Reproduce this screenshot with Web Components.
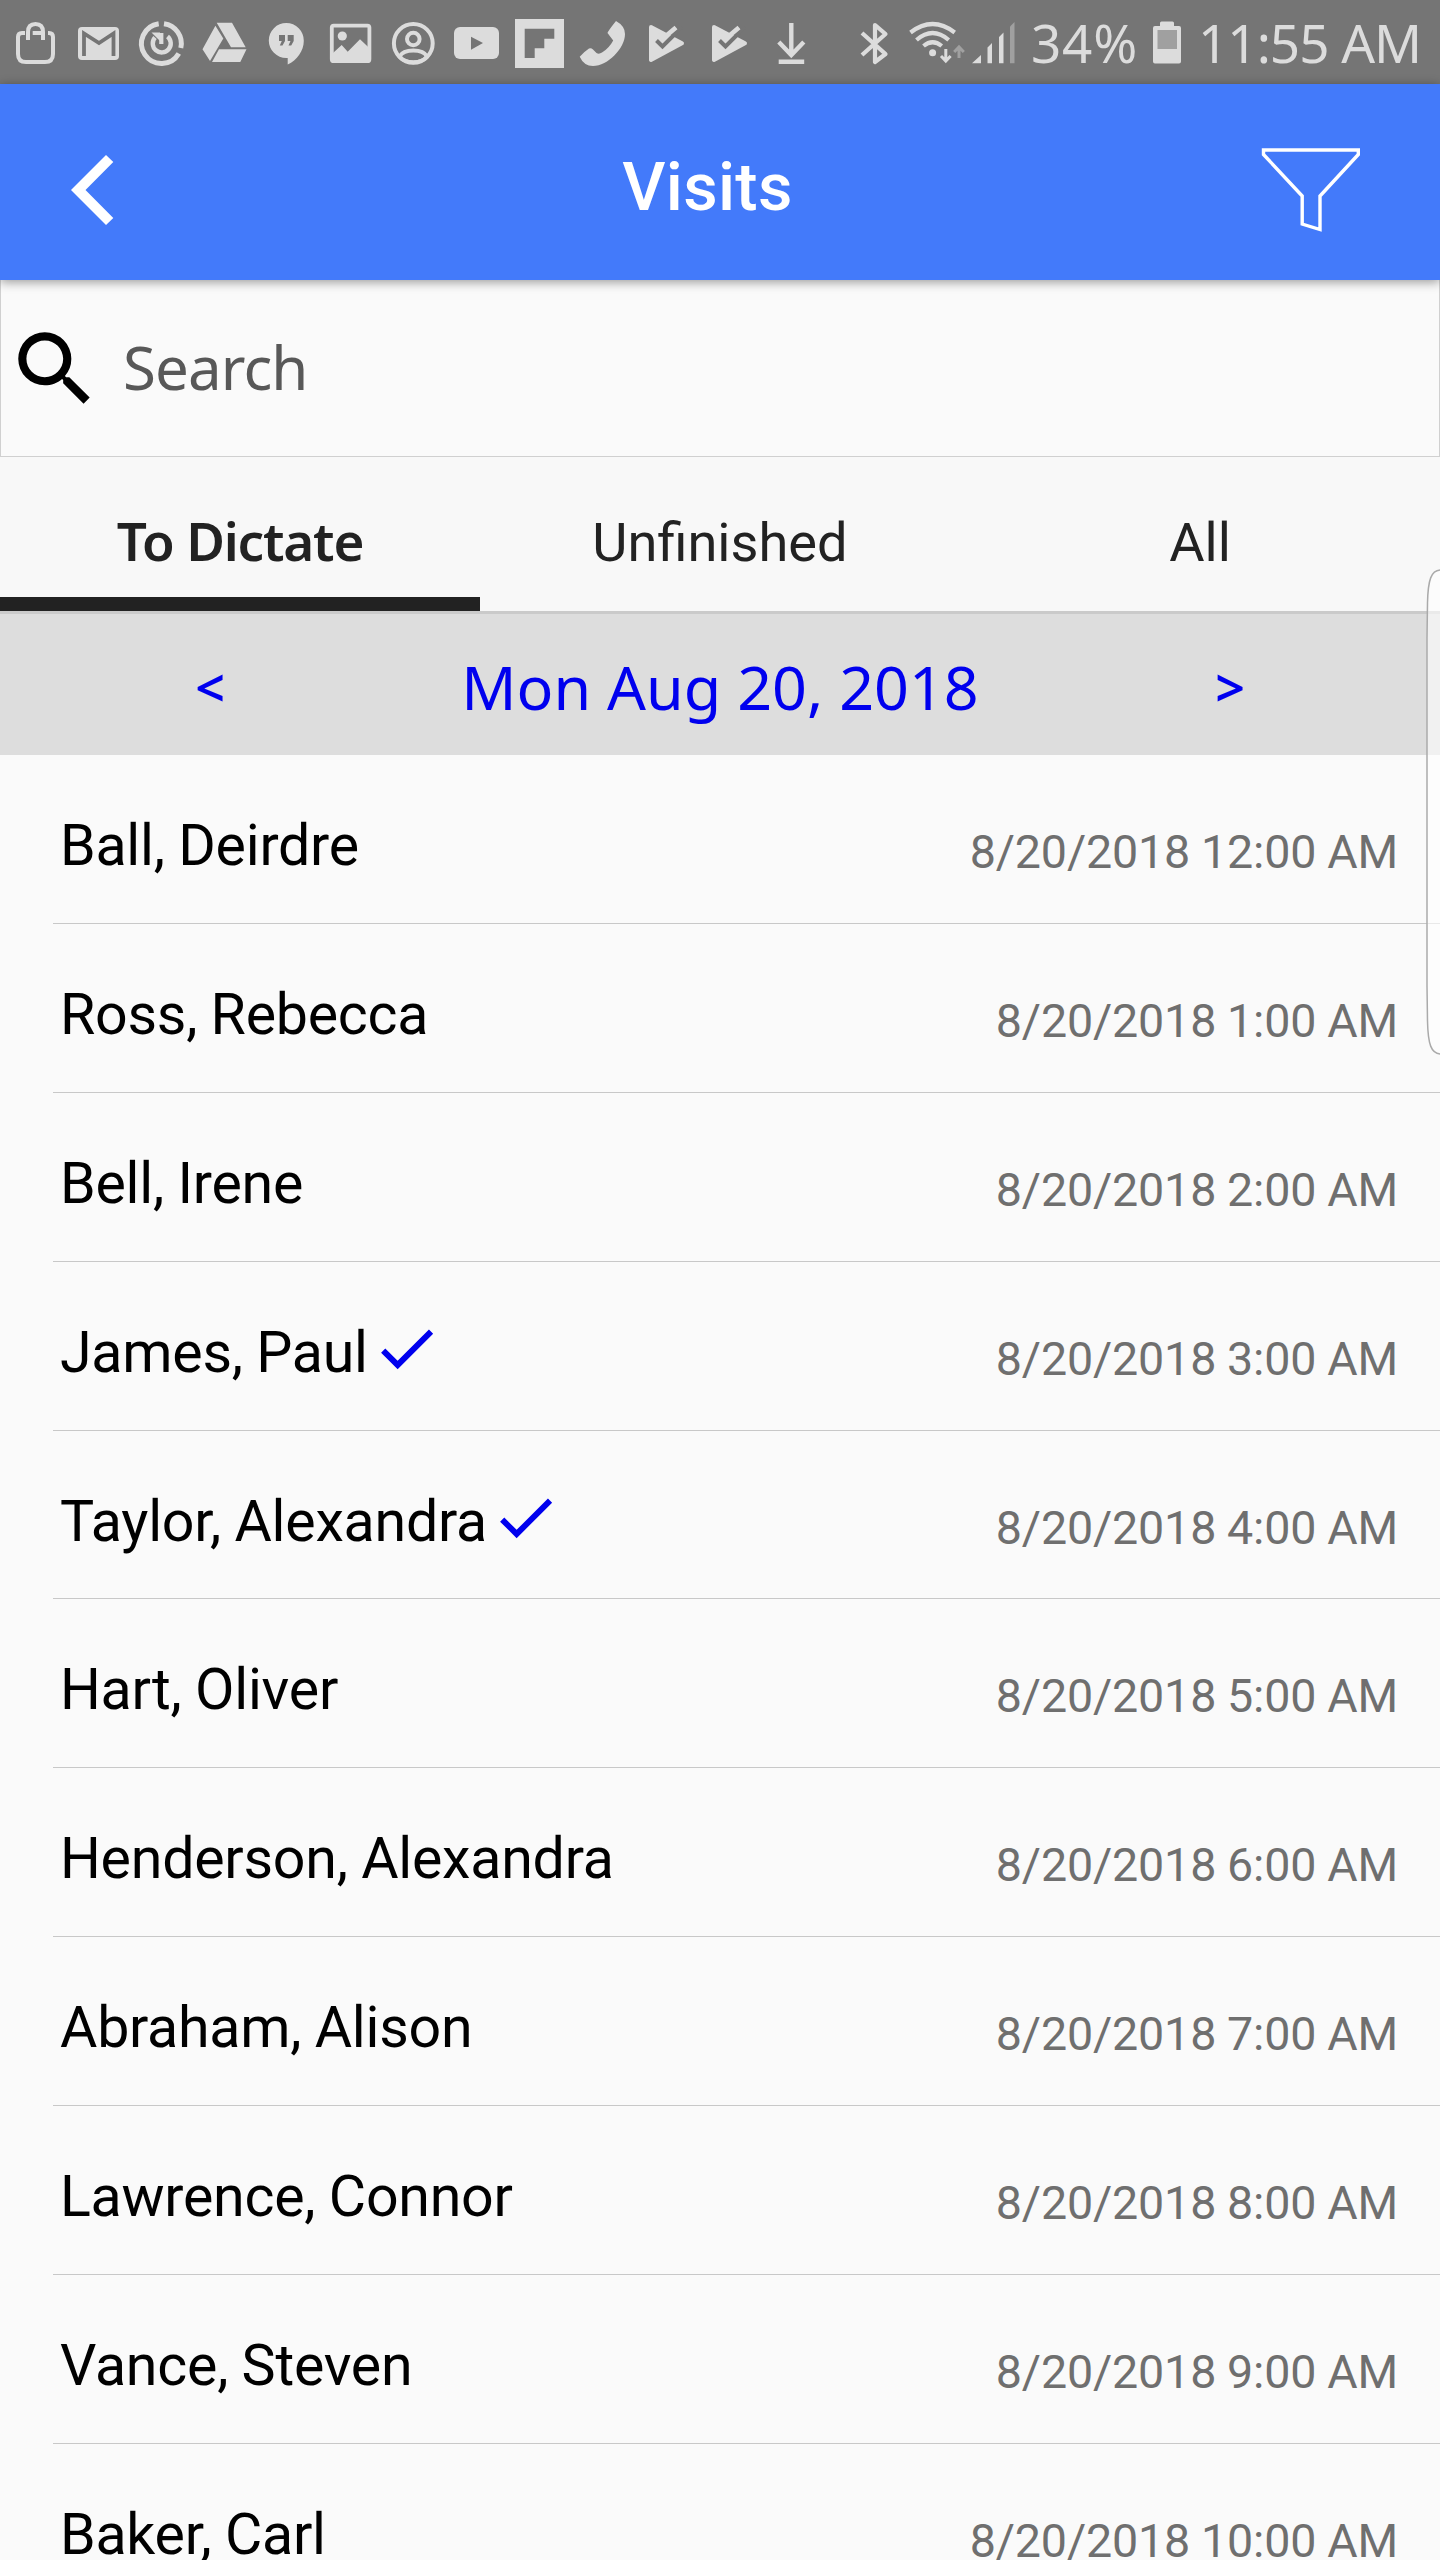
<!DOCTYPE html>
<html lang="en">
<head>
<meta charset="utf-8">
<title>Visits</title>
<style>
    html, body {
        margin: 0;
        padding: 0;
    }
    body {
        width: 1440px;
        height: 2560px;
        overflow: hidden;
        background: #fafafa;
        font-family: Roboto, sans-serif;
    }
</style>
</head>
<body>
<visits-app></visits-app>

<script>
const SYSTEM_FONT = '"Noto Sans", "Open Sans", sans-serif';

// notification icons, every one drawn in a 63x84 cell
const CHECK_PLAY = `
    <path d="M17 27L48 43.3L17 60Z" fill="#dcdcdc" stroke="#dcdcdc" stroke-width="4" stroke-linejoin="round"/>
    <path d="M22.5 40.5L28.5 46.5L48 27" fill="none" stroke="#757575" stroke-width="4"/>
    <path d="M27 36L29.5 38L42 27.5" fill="none" stroke="#dcdcdc" stroke-width="4.6"/>`;

const NOTIFICATIONS = [
    // bag
    `<g fill="none" stroke="#dcdcdc" stroke-width="4">
        <path d="M21 33H18Q14 33 14 37V54Q14 62 22 62H41Q49 62 49 54V37Q49 33 45 33H44"/>
        <path d="M24 40V32Q24 24 31.5 24Q39 24 39 32V40M28.7 33H39"/>
    </g>`,
    // mail
    `<rect x="11" y="27" width="41" height="33" rx="4" fill="#dcdcdc"/>
    <path d="M17 56V33.5L32 43L46.5 33.5V56" fill="none" stroke="#757575" stroke-width="3.8"/>`,
    // cleaner
    `<g fill="none" stroke="#dcdcdc" stroke-width="5">
        <path d="M34 23.7A20 20 0 0 1 50.8 48"/>
        <path d="M48.8 53.5A20 20 0 1 1 28.7 23.7"/>
        <path d="M37.5 36.5A9 9 0 1 1 25 37.5" stroke-width="4.4"/>
        <path d="M31.3 33V44" stroke-width="4.2"/>
    </g>
    <path d="M21.5 32.5H30V41Z" fill="#dcdcdc"/>`,
    // drive
    `<path d="M23.7 22.7H39L52.7 47.3H38ZM22.4 25.7L30.3 38.5L17 61L9.5 49.3ZM26 49.3H53.5L47.3 62H19Z" fill="#dcdcdc"/>`,
    // hangouts
    `<path d="M30.3 23A17.5 17.5 0 0 0 30.3 58H31.7V64.5C41 60 47.8 51 47.8 40.7A17.5 17.5 0 0 0 30.3 23Z" fill="#dcdcdc"/>
    <path d="M23 35H29V41L26.5 45.5H23.8L25.8 41H23ZM31.7 35H37.7V41L35.2 45.5H32.5L34.5 41H31.7Z" fill="#757575"/>`,
    // picture
    `<rect x="12.8" y="25.6" width="37.6" height="35.6" rx="2" fill="none" stroke="#dcdcdc" stroke-width="3.8"/>
    <circle cx="23.3" cy="36" r="4.6" fill="#dcdcdc"/>
    <path d="M14 53L22.7 45L28.7 51.7L41 39.3L50 47.8V61H14Z" fill="#dcdcdc"/>`,
    // account
    `<g fill="none" stroke="#dcdcdc" stroke-width="4">
        <circle cx="31.3" cy="43.3" r="19.4"/>
        <circle cx="31.3" cy="39" r="6.3"/>
        <path d="M17.5 56.5C22 48.5 40.6 48.5 45.1 56.5C40 64 22.6 64 17.5 56.5Z"/>
    </g>`,
    // video
    `<rect x="9" y="27" width="45" height="32" rx="6" fill="#dcdcdc"/>
    <path d="M26 36.7L38 43L26 49.7Z" fill="#757575"/>`,
    // flipboard
    `<rect x="7" y="19" width="49" height="49" fill="#dcdcdc"/>
    <path d="M16.7 28.7H46.3V38.7H36.3V48.3H26.7V58H16.7Z" fill="#757575"/>`,
    // phone
    `<path d="M45 21Q54 26 54 34C54 48 37 66 22 66Q13 66 8.7 56.7Q13 52 18 48.6Q20 47.6 22 49.5L25.5 53Q28 54.5 31 52.5C36 49.5 40 45 42.2 40.5L36.5 33Q37 31 45 21Z" fill="#dcdcdc"/>`,
    CHECK_PLAY,
    CHECK_PLAY,
    // download
    `<path d="M31.3 23V56M18.8 42L31.3 55L43.8 42M18.7 61.7H44.2" fill="none" stroke="#dcdcdc" stroke-width="4.4"/>`
];

const VISITS = [
    { name: 'Ball, Deirdre', time: '8/20/2018 12:00 AM' },
    { name: 'Ross, Rebecca', time: '8/20/2018 1:00 AM' },
    { name: 'Bell, Irene', time: '8/20/2018 2:00 AM' },
    { name: 'James, Paul', time: '8/20/2018 3:00 AM', done: true },
    { name: 'Taylor, Alexandra', time: '8/20/2018 4:00 AM', done: true },
    { name: 'Hart, Oliver', time: '8/20/2018 5:00 AM' },
    { name: 'Henderson, Alexandra', time: '8/20/2018 6:00 AM' },
    { name: 'Abraham, Alison', time: '8/20/2018 7:00 AM' },
    { name: 'Lawrence, Connor', time: '8/20/2018 8:00 AM' },
    { name: 'Vance, Steven', time: '8/20/2018 9:00 AM' },
    { name: 'Baker, Carl', time: '8/20/2018 10:00 AM' }
];

class StatusBar extends HTMLElement {
    constructor() {
        super();
        this.attachShadow({ mode: 'open' });

        this.shadowRoot.innerHTML = `
        <style>
            :host {
                display: flex;
                align-items: center;
                height: 84px;
                padding-left: 4px;
                box-sizing: border-box;
                background: #757575;
                color: #dcdcdc;
                font: 53px/84px ${SYSTEM_FONT};
                white-space: nowrap;
            }
            svg {
                display: block;
                flex: none;
            }
            span {
                padding-top: 2px;
            }
            .radios {
                margin-left: 27px;
            }
            .percent {
                width: 119px;
                margin-left: 11px;
                letter-spacing: 0.8px;
            }
            .battery {
                margin-right: 14px;
            }
            .clock {
                letter-spacing: -1px;
            }
        </style>
        ${NOTIFICATIONS.map(icon => `<svg width="63" height="84" viewBox="0 0 63 84">${icon}</svg>`).join('')}
        <svg class="radios" width="170" height="84" viewBox="850 0 170 84">
            <path d="M862 33L885.5 54L875 62V25L885.5 34L862 55" fill="none" stroke="#dcdcdc" stroke-width="4.2" stroke-linejoin="round"/>
            <g fill="none" stroke="#dcdcdc" stroke-width="4.2">
                <path d="M910.5 32.5Q932.6 15.5 954.7 32.5"/>
                <path d="M916.5 40Q932.6 26 948.7 40"/>
                <path d="M923.5 46Q932.6 38.5 941.7 46"/>
            </g>
            <circle cx="932.6" cy="52.7" r="3.5" fill="#dcdcdc"/>
            <path d="M945.8 49V60M941 56L945.8 61L950.6 56" fill="none" stroke="#dcdcdc" stroke-width="3"/>
            <path d="M959 58V48M954.2 52L959 47L963.8 52" fill="none" stroke="#a0a0a0" stroke-width="3"/>
            <path d="M972 63.3L981 55V63.3ZM987.5 63.3V47.5L992 43V63.3ZM999 63.3V37L1003.5 32.5V63.3Z" fill="#dcdcdc"/>
            <path d="M1010 63.3V26.5L1014.5 22V63.3Z" fill="#a0a0a0"/>
        </svg>
        <span class="percent">34%</span>
        <svg class="battery" width="34" height="84" viewBox="1150 0 34 84">
            <path d="M1160 26V23Q1160 21.5 1161.5 21.5H1172.5Q1174 21.5 1174 23V26H1179Q1181 26 1181 28V61.5Q1181 63.5 1179 63.5H1155Q1153 63.5 1153 61.5V28Q1153 26 1155 26Z" fill="#dcdcdc"/>
            <path d="M1157.5 30H1177V49H1157.5Z" fill="#a0a0a0"/>
        </svg>
        <span class="clock">11:55 AM</span>
        `;
    }
}

class TitleBar extends HTMLElement {
    constructor() {
        super();
        this.attachShadow({ mode: 'open' });

        this.shadowRoot.innerHTML = `
        <style>
            :host {
                display: grid;
                grid-template-columns: 187px 1fr 200px;
                align-items: center;
                position: relative;
                z-index: 1;
                height: 196px;
                background: #437afa;
                color: #fff;
                box-shadow: 0 2px 10px rgba(0, 0, 0, 0.4);
            }
            svg {
                display: block;
            }
            h1 {
                margin: 0;
                padding: 9px 12px 0 0;
                font-size: 67px;
                font-weight: 500;
                line-height: 80px;
                letter-spacing: 0.3px;
                text-align: center;
            }
        </style>
        <svg width="187" height="196" viewBox="0 84 187 196">
            <path d="M106 155L113.3 162L85.5 190L113.3 218L106 225L71 190Z" fill="#fff"/>
        </svg>
        <h1><slot></slot></h1>
        <svg width="200" height="196" viewBox="1240 84 200 196">
            <path d="M1263.5 150H1358.3V154.5L1320 196V229.5L1302.2 224V196L1263.5 154.5Z" fill="none" stroke="#fff" stroke-width="3.4"/>
        </svg>
        `;
    }
}

class SearchBox extends HTMLElement {
    constructor() {
        super();
        this.attachShadow({ mode: 'open' });

        this.shadowRoot.innerHTML = `
        <style>
            :host {
                display: flex;
                align-items: center;
                height: 177px;
                box-sizing: border-box;
                padding: 0 5px;
                border: 1px solid #d0d0d0;
                border-top: 0;
                background: #fafafa;
                color: #585858;
                font: 60px/80px ${SYSTEM_FONT};
                letter-spacing: -0.9px;
            }
            svg {
                flex: none;
                margin: 2px 19px 0 0;
            }
            span {
                padding-bottom: 3px;
            }
        </style>
        <svg width="98" height="98" viewBox="0 0 24 24">
            <path d="M15.5 14h-.79l-.28-.27A6.471 6.471 0 0 0 16 9.5 6.5 6.5 0 1 0 9.5 16c1.61 0 3.09-.59 4.23-1.57l.27.28v.79l5 4.99L20.49 19l-4.99-5zm-6 0C7.01 14 5 11.99 5 9.5S7.01 5 9.5 5 14 7.01 14 9.5 11.99 14 9.5 14z"/>
        </svg>
        <span><slot></slot></span>
        `;
    }
}

class TabItem extends HTMLElement {
    constructor() {
        super();
        this.attachShadow({ mode: 'open' });

        this.shadowRoot.innerHTML = `
        <style>
            :host {
                display: flex;
                flex: 1;
                align-items: center;
                justify-content: center;
                box-sizing: border-box;
                height: 154px;
                padding-top: 17px;
                color: #222;
                font-size: 54.2px;
            }
            :host([active]) {
                padding-top: 29px;
                border-bottom: 14px solid #222;
                font: 600 53px/1.4 ${SYSTEM_FONT};
                letter-spacing: -1.2px;
            }
        </style>
        <slot></slot>
        `;
    }
}

class TabStrip extends HTMLElement {
    constructor() {
        super();
        this.attachShadow({ mode: 'open' });

        this.shadowRoot.innerHTML = `
        <style>
            :host {
                display: flex;
                background: #f8f8f8;
                border-bottom: 3px solid #cacaca;
            }
        </style>
        <slot></slot>
        `;
    }
}

class DateNav extends HTMLElement {
    constructor() {
        super();
        this.attachShadow({ mode: 'open' });

        this.shadowRoot.innerHTML = `
        <style>
            :host {
                display: grid;
                grid-template-columns: 420px 1fr 420px;
                align-items: center;
                height: 141px;
                box-sizing: border-box;
                padding-top: 4px;
                background: #ddd;
                color: #0000ee;
                font: 61px/84px ${SYSTEM_FONT};
                text-align: center;
                white-space: nowrap;
            }
            .arrow {
                font-size: 52px;
                font-weight: 600;
            }
        </style>
        <span class="arrow">&lt;</span>
        <span><slot></slot></span>
        <span class="arrow">&gt;</span>
        `;
    }
}

class VisitRow extends HTMLElement {
    constructor() {
        super();
        this.attachShadow({ mode: 'open' });

        let time = this.getAttribute('time') || '';
        let done = this.hasAttribute('done');

        this.shadowRoot.innerHTML = `
        <style>
            :host {
                display: flex;
                align-items: center;
                justify-content: space-between;
                flex: none;
                height: 168.9px;
                box-sizing: border-box;
                margin-left: 53px;
                padding: 0 42px 0 7px;
                border-bottom: 1px solid #c8c8c8;
                white-space: nowrap;
            }
            .name {
                display: flex;
                align-items: center;
                padding-top: 13px;
                color: #000;
                font-size: 57.3px;
                letter-spacing: -0.25px;
                word-spacing: -0.5px;
            }
            .name svg {
                margin: 0 0 8px 3px;
            }
            .time {
                padding-top: 26px;
                color: #6f6f6f;
                font-size: 46.6px;
                letter-spacing: -0.15px;
                word-spacing: -0.5px;
            }
        </style>
        <div class="name">
            <slot></slot>
            ${done ? `<svg width="71" height="71" viewBox="0 0 24 24"><path d="M9 16.17L4.83 12l-1.42 1.41L9 19 21 7l-1.41-1.41z" fill="#0000ee"/></svg>` : ''}
        </div>
        <div class="time">${time}</div>
        `;
    }
}

// translucent handle of the edge panel, lies over the list
class EdgeHandle extends HTMLElement {
    constructor() {
        super();
        this.attachShadow({ mode: 'open' });

        this.shadowRoot.innerHTML = `
        <style>
            :host {
                display: block;
                position: absolute;
                top: 568px;
                right: 0;
                z-index: 2;
            }
            svg {
                display: block;
            }
        </style>
        <svg width="15" height="488" viewBox="0 0 15 488">
            <path d="M16 2C6 2 3 12 2.5 35L2 70V418L2.5 453C3 476 6 486 16 486Z" fill="rgba(255, 255, 255, 0.6)" stroke="#aaa" stroke-width="1.5"/>
        </svg>
        `;
    }
}

class VisitsApp extends HTMLElement {
    constructor() {
        super();
        this.attachShadow({ mode: 'open' });

        this.shadowRoot.innerHTML = `
        <style>
            :host {
                display: flex;
                flex-direction: column;
                position: relative;
                height: 2560px;
                overflow: hidden;
            }
            status-bar, title-bar, search-box, tab-strip, date-nav {
                flex: none;
            }
        </style>
        <status-bar></status-bar>
        <title-bar>Visits</title-bar>
        <search-box>Search</search-box>
        <tab-strip>
            <tab-item active>To Dictate</tab-item>
            <tab-item>Unfinished</tab-item>
            <tab-item>All</tab-item>
        </tab-strip>
        <date-nav>Mon Aug 20, 2018</date-nav>
        ${VISITS.map(v => `<visit-row time="${v.time}"${v.done ? ' done' : ''}>${v.name}</visit-row>`).join('')}
        <edge-handle></edge-handle>
        `;
    }
}

customElements.define('status-bar', StatusBar);
customElements.define('title-bar', TitleBar);
customElements.define('search-box', SearchBox);
customElements.define('tab-item', TabItem);
customElements.define('tab-strip', TabStrip);
customElements.define('date-nav', DateNav);
customElements.define('visit-row', VisitRow);
customElements.define('edge-handle', EdgeHandle);
customElements.define('visits-app', VisitsApp);
</script>
</body>
</html>
